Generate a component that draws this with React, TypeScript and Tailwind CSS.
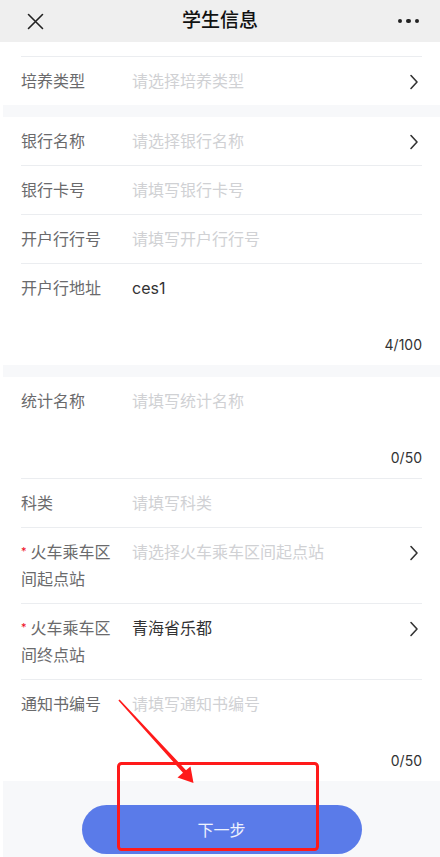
import type { ReactNode } from 'react';

const font = { fontFamily: 'Inter, "Noto Sans CJK SC", sans-serif' };

function Chevron() {
  return (
    <svg width="10" height="16" viewBox="0 0 10 16" className="shrink-0 mt-[6px] mr-[3px]">
      <path d="M2 1.5 L8 8 L2 14.5" fill="none" stroke="#333" strokeWidth="1.6" strokeLinecap="round" strokeLinejoin="round" />
    </svg>
  );
}

type RowProps = {
  label: ReactNode;
  placeholder?: string;
  value?: string;
  arrow?: boolean;
  counter?: string;
  last?: boolean;
};

function Row({ label, placeholder, value, arrow, counter, last }: RowProps) {
  return (
    <div className={`mx-[18px] flex pt-[11px] pb-[10px] ${last ? '' : 'border-b border-[#ebedf0]'}`}>
      <div className="w-[99px] mr-[12px] shrink-0 text-[16px] leading-[27px] text-[#6a6a6c]">{label}</div>
      <div className="flex-1 min-w-0">
        <div className="flex items-start">
          <div className={`flex-1 text-[16px] leading-[27px] ${value ? 'text-[#323233]' : 'text-[#d0d1d4]'}`}>
            {value ?? placeholder}
          </div>
          {arrow && <Chevron />}
        </div>
        {counter && (
          <>
            <div className="h-[33px]" />
            <div className="text-right text-[14px] leading-[20px] text-[#323233]">{counter}</div>
          </>
        )}
      </div>
    </div>
  );
}

function Required({ children }: { children: ReactNode }) {
  return (
    <>
      <span className="text-[#ee0a24] text-[11px] leading-[11px] mr-[4px] align-top inline-block mt-[7px]">*</span>
      {children}
    </>
  );
}

function Band() {
  return <div className="h-[12px] bg-[#f7f8fa]" />;
}

export default function App() {
  return (
    <div className="relative w-[440px] h-[857px] overflow-hidden bg-white" style={font}>
      {/* nav bar */}
      <div className="h-[42px] bg-[#efefef] flex items-center">
        <div className="w-[60px] pl-[27px]">
          <svg width="17" height="17" viewBox="0 0 17 17">
            <path d="M1.5 1.5 L15.5 15.5 M15.5 1.5 L1.5 15.5" stroke="#222" strokeWidth="1.6" strokeLinecap="round" />
          </svg>
        </div>
        <div className="flex-1 text-center text-[19px] font-medium text-[#111] leading-[26px]">学生信息</div>
        <div className="w-[60px] pr-[21px] flex justify-end gap-[4px]">
          <span className="w-[4.5px] h-[4.5px] rounded-full bg-[#222]" />
          <span className="w-[4.5px] h-[4.5px] rounded-full bg-[#222]" />
          <span className="w-[4.5px] h-[4.5px] rounded-full bg-[#222]" />
        </div>
      </div>

      <div className="ml-[3px]">
        <div className="h-[15px] mx-[18px] border-b border-[#ebedf0]" />
        <Row label="培养类型" placeholder="请选择培养类型" arrow last />
        <Band />
        <Row label="银行名称" placeholder="请选择银行名称" arrow />
        <Row label="银行卡号" placeholder="请填写银行卡号" />
        <Row label="开户行行号" placeholder="请填写开户行行号" />
        <Row label="开户行地址" value="ces1" counter="4/100" last />
        <Band />
        <Row label="统计名称" placeholder="请填写统计名称" counter="0/50" />
        <Row label="科类" placeholder="请填写科类" />
        <Row label={<Required>火车乘车区间起点站</Required>} placeholder="请选择火车乘车区间起点站" arrow />
        <Row label={<Required>火车乘车区间终点站</Required>} value="青海省乐都" arrow />
        <Row label="通知书编号" placeholder="请填写通知书编号" counter="0/50" last />
        <div className="bg-[#f7f8fa] pt-[24px] pb-[10px] flex justify-center">
          <button className="w-[280px] h-[49px] rounded-full bg-[#5a7be9] text-white/90 text-[16px]">下一步</button>
        </div>
      </div>

      {/* red annotation */}
      <svg className="absolute left-0 top-0 pointer-events-none" width="440" height="857" viewBox="0 0 440 857">
        <rect x="118.5" y="763.5" width="199" height="86" rx="3" fill="none" stroke="#ff1a1a" strokeWidth="3" />
        <polygon
          points="119.6,699.5 186,770.2 190.5,766.5 193.5,783 177.5,777.5 183,772.8 118.4,700.5"
          fill="#ff1a1a"
        />
      </svg>
    </div>
  );
}
